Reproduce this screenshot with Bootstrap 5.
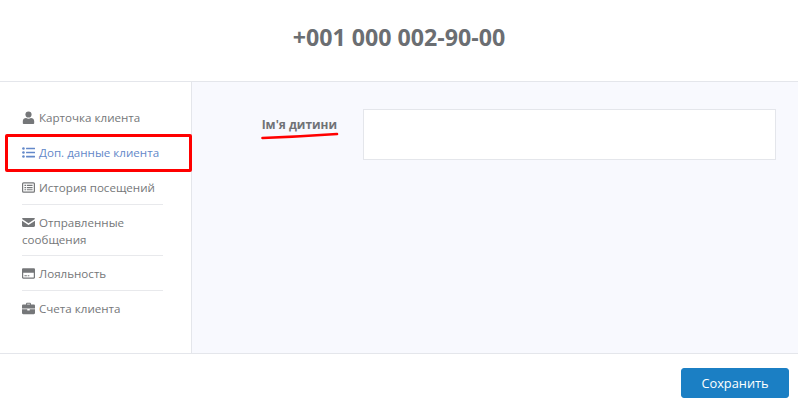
<!DOCTYPE html>
<html lang="ru">
<head>
<meta charset="utf-8">
<title>Клиент</title>
<link href="https://cdn.jsdelivr.net/npm/bootstrap@5.3.0/dist/css/bootstrap.min.css" rel="stylesheet">
<style>
html,body{height:409px;overflow:hidden;background:#fff}
body{font-family:"Open Sans","Liberation Sans",sans-serif;color:#757779;font-size:11.6px}
.head-zone{height:82px;border-bottom:1px solid #e4e6eb;padding-bottom:8px}
.phone-title{font-size:23.2px;font-weight:700;color:#6b6e72;margin:0;line-height:30px}
.mid-zone{height:271px}
.side-zone{width:192px;border-right:1px solid #e4e6eb;padding:18px 28px 0 22px;position:relative}
.side-item{display:block;color:#757779;text-decoration:none;font-size:11.6px;line-height:17px;padding:9px 0 8px;border-bottom:1px solid #e8e9ec}
.side-item.plain{border-bottom-color:transparent}
.side-item.on{color:#6388c9;white-space:nowrap}
.side-item svg{width:13px;height:13px;fill:currentColor;vertical-align:-2px;margin-right:1px}
.side-item.multi{padding:9px 0 7px}
.mark-box{position:absolute;left:5px;top:52px;width:187px;height:38px;border:3px solid #f00;border-radius:2px;pointer-events:none}
.main-zone{background:#f8f9fe;padding:27px 22px 0 0}
.label-col{width:171px;font-weight:700;font-size:11.9px;color:#707276;text-align:right;line-height:17px;padding-top:7px;padding-right:26px}
.label-text{position:relative;display:inline-block}
.red-line{position:absolute;left:-1px;top:15px;width:78px;height:9px}
.value-box{height:51px;background:#fff;border:1px solid #e4e6eb;border-radius:0;box-shadow:none}
.foot-zone{height:56px;border-top:1px solid #e4e6eb;padding:14px 9px 0 0}
.save-btn{width:108px;height:30px;background:#1b7fc4;border:1px solid #1b7fc4;color:#fff;font-size:12.8px;padding:0;border-radius:3px;line-height:28px}
</style>
</head>
<body>
<header class="head-zone d-flex align-items-center justify-content-center">
  <h1 class="phone-title">+001 000 002-90-00</h1>
</header>
<div class="mid-zone d-flex">
  <nav class="side-zone flex-shrink-0">
    <a class="side-item plain" href="#"><svg viewBox="0 0 16 16"><circle cx="8" cy="4.300" r="3.800"/><path d="M1 15v-2.600C1 10 3 8.500 5 8.500c1 .7 2 1 3 1s2-.3 3-1c2 0 4 1.500 4 3.900V15c0 .5-.4 1-1 1H2c-.6 0-1-.5-1-1z"/></svg> Карточка клиента</a>
    <a class="side-item plain on" href="#"><svg viewBox="0 0 16 16"><circle cx="1.800" cy="3" r="1.600"/><circle cx="1.800" cy="8" r="1.600"/><circle cx="1.800" cy="13" r="1.600"/><rect x="5" y="2" width="11" height="2" rx=".4"/><rect x="5" y="7" width="11" height="2" rx=".4"/><rect x="5" y="12" width="11" height="2" rx=".4"/></svg> Доп. данные клиента</a>
    <a class="side-item" href="#"><svg viewBox="0 0 16 16"><path fill-rule="evenodd" d="M2 1.500h12a2 2 0 0 1 2 2v9a2 2 0 0 1-2 2H2a2 2 0 0 1-2-2v-9a2 2 0 0 1 2-2zm0 1.500a.5.5 0 0 0-.5.500v9a.5.5 0 0 0 .5.500h12a.5.5 0 0 0 .5-.5v-9a.5.5 0 0 0-.5-.5z"/><path d="M3 4.500h2v1.500H3zM6 4.500h7v1.500H6zM3 7.300h2v1.500H3zM6 7.300h7v1.500H6zM3 10h2v1.500H3zM6 10h7v1.500H6z"/></svg> История посещений</a>
    <a class="side-item multi" href="#"><svg viewBox="0 0 16 16"><path d="M1.500 2.500h13c.8 0 1.500.7 1.500 1.300L8 9 0 3.800c0-.6.700-1.300 1.500-1.300z"/><path d="M0 5.700V12c0 .8.700 1.500 1.500 1.500h13c.8 0 1.500-.7 1.500-1.500V5.700L8 11z"/></svg> Отправленные сообщения</a>
    <a class="side-item" href="#"><svg viewBox="0 0 16 16"><path fill-rule="evenodd" d="M1.500 1.500h13c.8 0 1.500.7 1.500 1.500v10c0 .8-.7 1.500-1.500 1.500h-13C.7 14.500 0 13.800 0 13V3c0-.8.700-1.500 1.500-1.500zM1.500 7v5.500c0 .3.200.5.500.5h12c.3 0 .5-.2.500-.5V7z"/><path d="M3 10h3v1.500H3zM7 10h2v1.500H7z"/></svg> Лояльность</a>
    <a class="side-item plain" href="#"><svg viewBox="0 0 16 16"><path d="M5 3V2c0-.6.500-1 1-1h4c.5 0 1 .4 1 1v1h3.500c.8 0 1.500.7 1.500 1.500V8H0V4.500C0 3.700.700 3 1.500 3zm1.300 0h3.400V2.300H6.300z"/><path d="M0 9h6.500v1.500h3V9H16v4.500c0 .8-.7 1.500-1.500 1.500h-13C.7 15 0 14.300 0 13.500z"/></svg> Счета клиента</a>
    <div class="mark-box"></div>
  </nav>
  <main class="main-zone flex-grow-1 d-flex align-items-start">
    <div class="label-col flex-shrink-0"><span class="label-text">Ім'я дитини<svg class="red-line" viewBox="0 0 78 9"><path d="M1.500 7 Q40 5.500 76 3" fill="none" stroke="#f00" stroke-width="2.600" stroke-linecap="round"/></svg></span></div>
    <div class="value-box flex-grow-1"></div>
  </main>
</div>
<footer class="foot-zone d-flex justify-content-end align-items-start">
  <button type="button" class="btn save-btn">Сохранить</button>
</footer>
<script src="https://cdn.jsdelivr.net/npm/bootstrap@5.3.0/dist/js/bootstrap.bundle.min.js"></script>
</body>
</html>
